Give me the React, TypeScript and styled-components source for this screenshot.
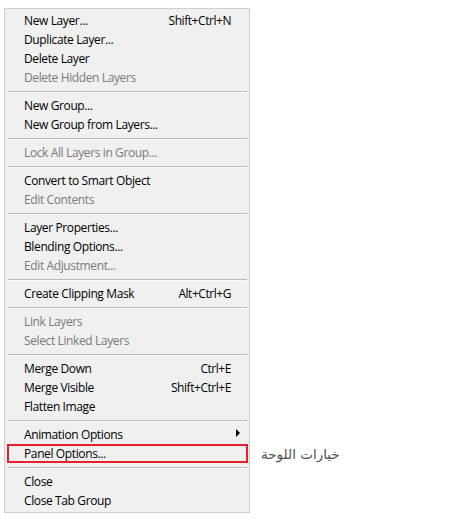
import React from "react";
import styled, { createGlobalStyle } from "styled-components";

const Global = createGlobalStyle`
  html, body { margin: 0; padding: 0; background: #ffffff; }
  body { font-family: "Open Sans", "Noto Sans", sans-serif; }
`;

const Page = styled.div`
  padding: 8px 0 0 4px;
`;

const Menu = styled.div`
  width: 244px;
  background: #f0f0f0;
  border: 1px solid #cfcfcf;
  padding: 2px 0;
  display: flex;
  flex-direction: column;
`;

const Row = styled.div<{ $disabled?: boolean; $marked?: boolean }>`
  position: relative;
  height: 19px;
  display: flex;
  align-items: center;
  justify-content: space-between;
  padding: 0 18px 0 ${(p) => (p.$marked ? 17 : 19)}px;
  margin: 0 ${(p) => (p.$marked ? "1px 0 2px" : "0")};
  box-shadow: ${(p) => (p.$marked ? "inset 0 0 0 2px #e8202c" : "none")};
  font-size: 12px;
  color: ${(p) => (p.$disabled ? "#7a7a7a" : "#000000")};
  white-space: nowrap;
`;

const Label = styled.span`
  letter-spacing: -0.38px;
`;

const Shortcut = styled.span`
  letter-spacing: -0.45px;
`;

const Separator = styled.div`
  height: 9px;
  display: flex;
  align-items: center;
  padding: 0 2px 0 3px;
  &::after {
    content: "";
    flex: 1;
    height: 1px;
    background: #b9b9b9;
    box-shadow: 0 1px 0 #fafafa;
  }
`;

const Arrow = styled.span`
  width: 0;
  height: 0;
  border-top: 4px solid transparent;
  border-bottom: 4px solid transparent;
  border-left: 4px solid #000;
  margin-right: -9px;
  margin-top: -3px;
`;

const Callout = styled.span`
  position: absolute;
  left: calc(100% + 13px);
  top: 0;
  height: 19px;
  display: flex;
  align-items: center;
  font-family: "DejaVu Sans", sans-serif;
  font-size: 13.5px;
  color: #505050;
  direction: rtl;
`;

type Item =
  | { sep: true }
  | { label: string; shortcut?: string; disabled?: boolean; submenu?: boolean; marked?: boolean; note?: string };

const items: Item[] = [
  { label: "New Layer...", shortcut: "Shift+Ctrl+N" },
  { label: "Duplicate Layer..." },
  { label: "Delete Layer" },
  { label: "Delete Hidden Layers", disabled: true },
  { sep: true },
  { label: "New Group..." },
  { label: "New Group from Layers..." },
  { sep: true },
  { label: "Lock All Layers in Group...", disabled: true },
  { sep: true },
  { label: "Convert to Smart Object" },
  { label: "Edit Contents", disabled: true },
  { sep: true },
  { label: "Layer Properties..." },
  { label: "Blending Options..." },
  { label: "Edit Adjustment...", disabled: true },
  { sep: true },
  { label: "Create Clipping Mask", shortcut: "Alt+Ctrl+G" },
  { sep: true },
  { label: "Link Layers", disabled: true },
  { label: "Select Linked Layers", disabled: true },
  { sep: true },
  { label: "Merge Down", shortcut: "Ctrl+E" },
  { label: "Merge Visible", shortcut: "Shift+Ctrl+E" },
  { label: "Flatten Image" },
  { sep: true },
  { label: "Animation Options", submenu: true },
  { label: "Panel Options...", marked: true, note: "خيارات اللوحة" },
  { sep: true },
  { label: "Close" },
  { label: "Close Tab Group" },
];

export default function App() {
  return (
    <>
      <Global />
      <Page>
        <Menu>
          {items.map((it, i) =>
            "sep" in it ? (
              <Separator key={i} />
            ) : (
              <Row key={i} $disabled={it.disabled} $marked={it.marked}>
                <Label>{it.label}</Label>
                {it.shortcut && <Shortcut>{it.shortcut}</Shortcut>}
                {it.submenu && <Arrow />}
                {it.note && <Callout>{it.note}</Callout>}
              </Row>
            )
          )}
        </Menu>
      </Page>
    </>
  );
}
